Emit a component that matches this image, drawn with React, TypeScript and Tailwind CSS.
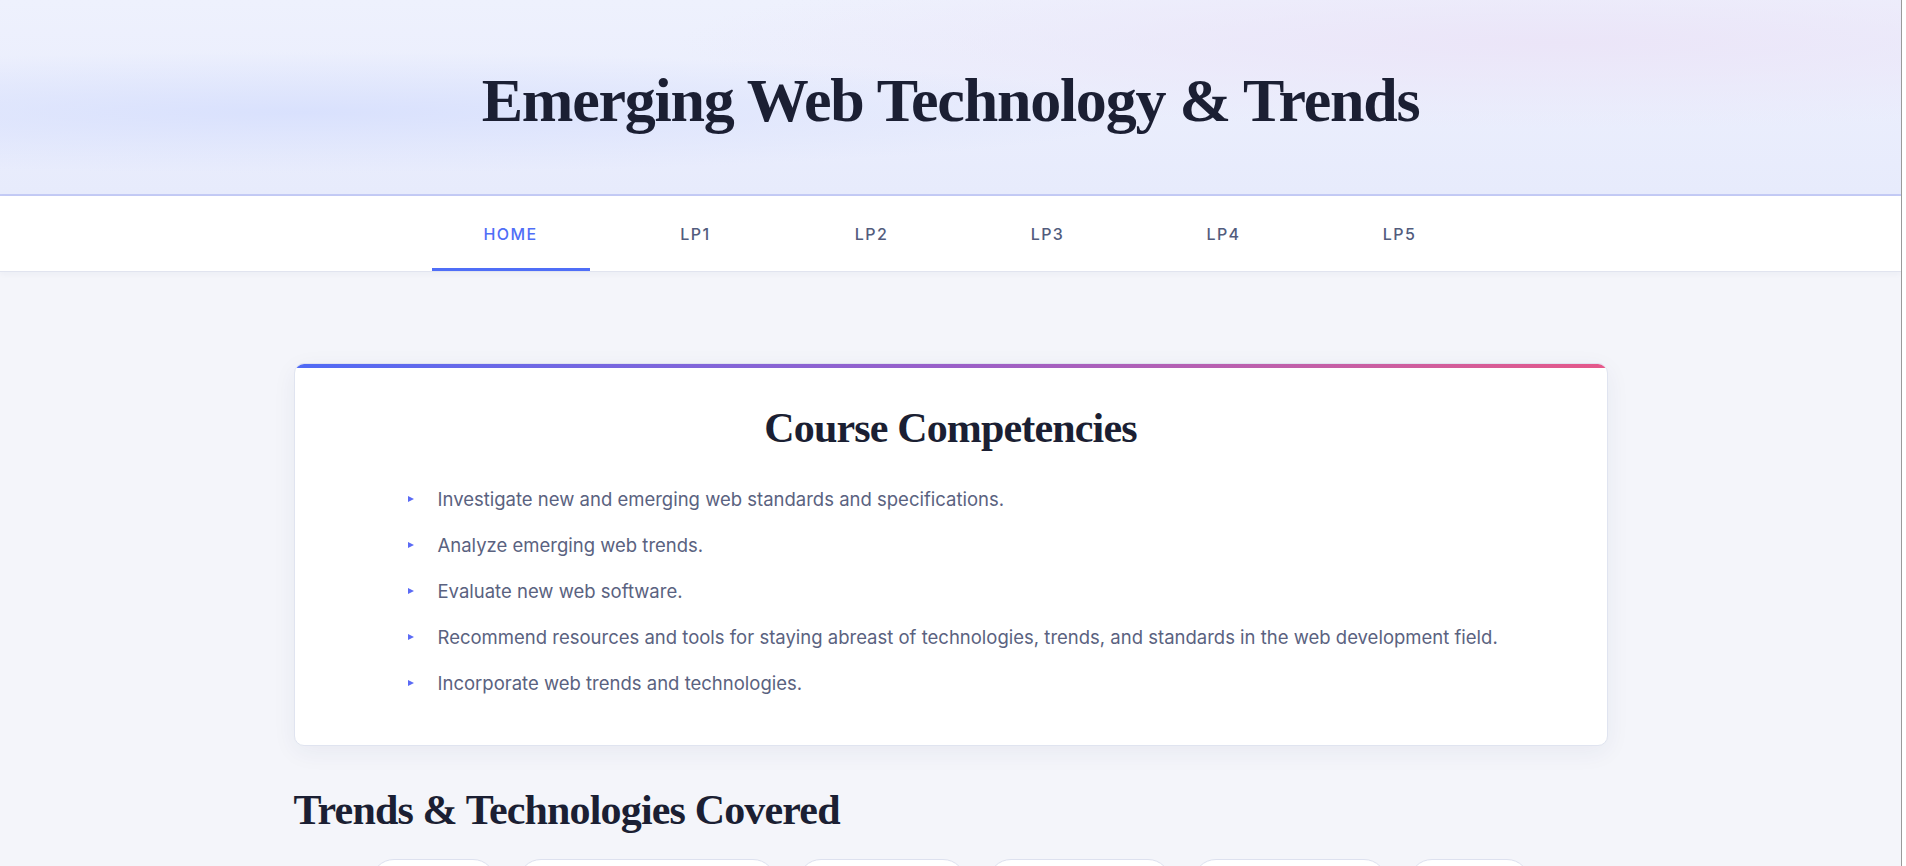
import React from 'react';

const NAV = ['HOME', 'LP1', 'LP2', 'LP3', 'LP4', 'LP5'];

const COMPETENCIES = [
  'Investigate new and emerging web standards and specifications.',
  'Analyze emerging web trends.',
  'Evaluate new web software.',
  'Recommend resources and tools for staying abreast of technologies, trends, and standards in the web development field.',
  'Incorporate web trends and technologies.',
];

// only the top edge of these pills is on screen
const TOPICS = [
  { id: 'ai', w: 'w-[125px]' },
  { id: 'pwa', w: 'w-[258px]' },
  { id: 'wasm', w: 'w-[168px]' },
  { id: 'components', w: 'w-[183px]' },
  { id: 'cms', w: 'w-[194px]' },
  { id: 'web3', w: 'w-[121px]' },
];

const serif = "font-['Liberation_Serif',serif]";
const sans = "font-['Inter',sans-serif]";

export default function App() {
  return (
    <div className="flex h-[866px] w-full overflow-hidden bg-[#f4f5fa]">
      <div className="flex min-w-0 flex-1 flex-col">
        <header className="flex h-[196px] shrink-0 items-center justify-center border-b-2 border-[#c4cbf6] bg-[radial-gradient(ellipse_at_16%_58%,#d9e1fd_0%,rgba(217,225,253,0)_38%),radial-gradient(ellipse_at_82%_22%,#ebe5f8_0%,rgba(235,229,248,0)_40%),linear-gradient(180deg,#eef1fd_0%,#e7ebfc_100%)] pt-[5px]">
          <h1 className={`${serif} text-[62px] font-bold leading-none tracking-[-0.02em] text-[#1b1f33]`}>
            Emerging Web Technology &amp; Trends
          </h1>
        </header>

        <nav className="flex h-[76px] shrink-0 justify-center gap-[36px] border-b border-[#e1e4ef] bg-white shadow-[0_2px_6px_rgba(30,40,90,0.04)]">
          {NAV.map((item, i) => (
            <a
              key={item}
              href="#"
              className={`${sans} flex h-[75px] items-center justify-center border-b-[3px] pt-[3px] text-[16px] font-medium tracking-[0.09em] ${
                i === 0
                  ? 'w-[158px] border-[#4f6ef7] text-[#4f6ef7]'
                  : 'w-[140px] border-transparent text-[#525c7d]'
              }`}
            >
              {item}
            </a>
          ))}
        </nav>

        <main className="flex shrink-0 justify-center pt-[91px]">
          <div className="w-[1314px]">
            <section className="overflow-hidden rounded-[10px] border border-[#e0e4f0] bg-white shadow-[0_6px_24px_rgba(40,50,110,0.06)]">
              <div className="h-[4px] bg-gradient-to-r from-[#4f6af5] via-[#9a5fc8] to-[#e5588a]" />
              <div className="pb-[48px] pt-[39px]">
                <h2 className={`${serif} text-center text-[42px] font-bold leading-none tracking-[-0.02em] text-[#1b1f33]`}>
                  Course Competencies
                </h2>
                <ul className={`${sans} mt-[36px] flex flex-col gap-[18px] pl-[113px] text-[18.5px] leading-[28px] text-[#5a6280]`}>
                  {COMPETENCIES.map((c) => (
                    <li key={c} className="flex items-center">
                      <span className="h-0 w-0 border-y-[3.5px] border-l-[6px] border-y-transparent border-l-[#5b6bf5]" />
                      <span className="ml-[24px]">{c}</span>
                    </li>
                  ))}
                </ul>
              </div>
            </section>

            <h2 className={`${serif} mt-[43px] text-[42px] font-bold leading-none tracking-[-0.02em] text-[#1b1f33]`}>
              Trends &amp; Technologies Covered
            </h2>

            <div className="mt-[28px] flex flex-wrap justify-center gap-[22px]">
              {TOPICS.map((t) => (
                <span
                  key={t.id}
                  className={`${t.w} h-[46px] rounded-full border border-[#dde1ef] bg-white`}
                />
              ))}
            </div>
          </div>
        </main>
      </div>
      <div className="w-[5px] shrink-0 border-l border-[#9a9a9a] bg-white" />
    </div>
  );
}
